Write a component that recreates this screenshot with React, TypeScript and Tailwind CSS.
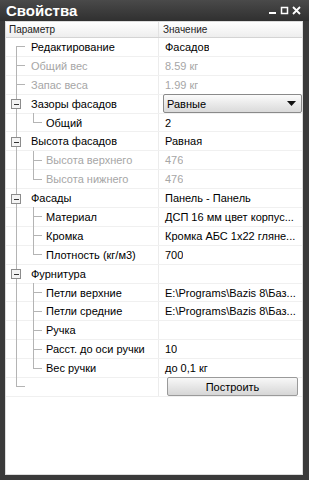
import React from "react";

type Row = {
  label: string;
  value?: string;
  level: 0 | 1;
  kind: "leaf" | "group" | "child";
  last?: boolean;
  first?: boolean;
  dim?: boolean;
  select?: boolean;
  button?: boolean;
};

const ROWS: Row[] = [
  { label: "Редактирование", value: "Фасадов", level: 0, kind: "leaf", first: true },
  { label: "Общий вес", value: "8.59 кг", level: 0, kind: "leaf", dim: true },
  { label: "Запас веса", value: "1.99 кг", level: 0, kind: "leaf", dim: true },
  { label: "Зазоры фасадов", value: "Равные", level: 0, kind: "group", select: true },
  { label: "Общий", value: "2", level: 1, kind: "child", last: true },
  { label: "Высота фасадов", value: "Равная", level: 0, kind: "group" },
  { label: "Высота верхнего", value: "476", level: 1, kind: "child", dim: true },
  { label: "Высота нижнего", value: "476", level: 1, kind: "child", last: true, dim: true },
  { label: "Фасады", value: "Панель - Панель", level: 0, kind: "group" },
  { label: "Материал", value: "ДСП 16 мм цвет корпус...", level: 1, kind: "child" },
  { label: "Кромка", value: "Кромка АБС 1х22 гляне...", level: 1, kind: "child" },
  { label: "Плотность (кг/м3)", value: "700", level: 1, kind: "child", last: true },
  { label: "Фурнитура", value: "", level: 0, kind: "group" },
  { label: "Петли верхние", value: "E:\\Programs\\Bazis 8\\Баз...", level: 1, kind: "child" },
  { label: "Петли средние", value: "E:\\Programs\\Bazis 8\\Баз...", level: 1, kind: "child" },
  { label: "Ручка", value: "", level: 1, kind: "child" },
  { label: "Расст. до оси ручки", value: "10", level: 1, kind: "child" },
  { label: "Вес ручки", value: "до 0,1 кг", level: 1, kind: "child", last: true },
  { label: "", level: 0, kind: "leaf", last: true, button: true },
];

const LINE = "#b4b4b4";

function Gutter({ row }: { row: Row }) {
  const h = 19;
  const mid = 9.5;
  const w = row.level === 0 ? 25 : 40;
  return (
    <svg width={w} height={h} className="shrink-0" shapeRendering="crispEdges">
      <line x1={10.5} x2={10.5} y1={row.first ? mid : 0} y2={row.last && row.level === 0 ? mid : h} stroke={LINE} />
      {row.kind === "leaf" && <line x1={10} x2={19} y1={mid} y2={mid} stroke={LINE} />}
      {row.kind === "group" && (
        <g>
          <rect x={5.5} y={5.5} width={9} height={9} fill="#f4f4f4" stroke="#8c8c8c" />
          <line x1={8} x2={13} y1={10} y2={10} stroke="#333" />
        </g>
      )}
      {row.kind === "child" && (
        <g>
          <line x1={27.5} x2={27.5} y1={0} y2={row.last ? mid : h} stroke={LINE} />
          <line x1={27} x2={36} y1={mid} y2={mid} stroke={LINE} />
        </g>
      )}
    </svg>
  );
}

export default function App() {
  return (
    <div
      className="flex h-[480px] w-[309px] flex-col bg-[#3a3a3a]"
      style={{ fontFamily: '"Liberation Sans", Arial, sans-serif' }}
    >
      <div className="flex h-[21px] shrink-0 items-center justify-between bg-gradient-to-b from-[#4a4a4a] to-[#303030] pl-[6px] pr-[8px]">
        <span className="text-[15px] font-bold leading-none text-white">Свойства</span>
        <div className="flex items-center gap-[3px] text-white">
          <svg width="9" height="9"><rect x="1" y="6" width="7" height="2" fill="#fff" /></svg>
          <svg width="9" height="9"><rect x="1.5" y="1.5" width="6" height="6" fill="none" stroke="#fff" strokeWidth="1.5" /></svg>
          <svg width="9" height="9"><path d="M1 1 L8 8 M8 1 L1 8" stroke="#fff" strokeWidth="1.8" /></svg>
        </div>
      </div>
      <div className="mx-[5px] mb-[5px] mr-[6px] flex flex-1 flex-col border border-[#dcdcdc] bg-white">
        <div className="flex h-[16px] shrink-0 items-center border-b border-[#d4d4d4] bg-gradient-to-b from-white to-[#eeeeee] text-[10px] text-[#222]">
          <div className="w-[153px] border-r border-[#e2e2e2] pl-[3px]">Параметр</div>
          <div className="pl-[4px]">Значение</div>
        </div>
        {ROWS.map((row, i) => (
          <div key={i} className="flex h-[18.9px] shrink-0 border-b border-[#f0f0f0] text-[11px] leading-[18px]">
            <div className="flex w-[153px] shrink-0 items-center border-r border-[#ececec]">
              <Gutter row={row} />
              <span className={row.dim ? "text-[#a6a6a6]" : "text-black"}>{row.label}</span>
            </div>
            <div className="flex min-w-0 flex-1 items-center">
              {row.select ? (
                <div className="ml-[4px] flex h-[19px] flex-1 items-center justify-between rounded-[2px] border border-[#8a8a8a] bg-gradient-to-b from-[#fbfbfb] to-[#dadada] pl-[3px] pr-[5px] text-black">
                  <span>{row.value}</span>
                  <svg width="9" height="5"><path d="M0 0 H9 L4.5 5 Z" fill="#111" /></svg>
                </div>
              ) : row.button ? (
                <div className="ml-[8px] mr-[4px] flex h-[19px] flex-1 items-center justify-center rounded-[2px] border border-[#9a9a9a] bg-gradient-to-b from-[#f8f8f8] to-[#d6d6d6] text-black">
                  Построить
                </div>
              ) : (
                <span className={"truncate pl-[6px] " + (row.dim ? "text-[#a6a6a6]" : "text-black")}>{row.value}</span>
              )}
            </div>
          </div>
        ))}
      </div>
    </div>
  );
}
